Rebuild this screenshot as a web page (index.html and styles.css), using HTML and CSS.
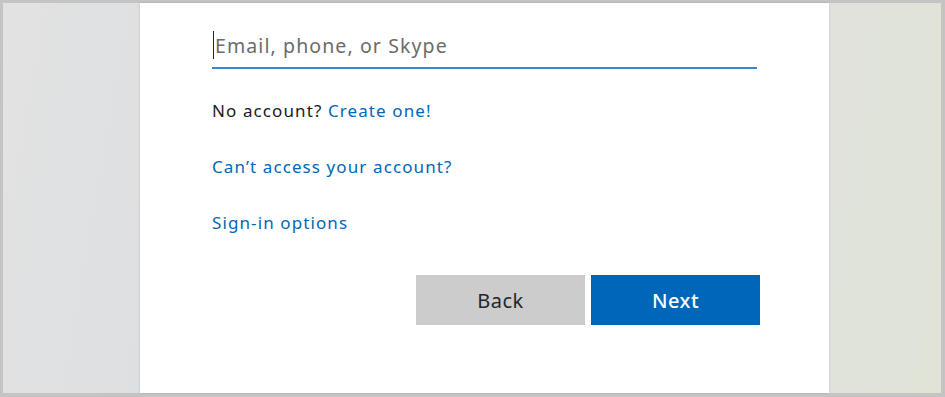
FILE: index.html
```html
<!DOCTYPE html>
<html lang="en">
<head>
  <meta charset="UTF-8">
  <meta name="viewport" content="width=device-width, initial-scale=1.0">
  <title>Sign in</title>
  <link rel="stylesheet" href="styles.css">
</head>
<body>
  <div class="frame">
    <div class="card">
      <div class="email-field">
        <span class="caret"></span><span class="placeholder">Email, phone, or Skype</span>
      </div>

      <p class="line">No account? <a href="#">Create one!</a></p>
      <p class="line"><a href="#">Can’t access your account?</a></p>
      <p class="line"><a href="#">Sign-in options</a></p>

      <div class="actions">
        <button class="btn back">Back</button>
        <button class="btn next">Next</button>
      </div>
    </div>
  </div>
</body>
</html>
```

FILE: styles.css
```css
body {
  margin: 0;
  font-family: "Noto Sans", "Open Sans", sans-serif;
}

.frame {
  box-sizing: border-box;
  height: 397px;
  border: 3px solid #c4c4c4;
  border-right-width: 4px;
  border-bottom-width: 4px;
  background: linear-gradient(100deg, #e2e2e2 0%, #dcdfe2 25%, #e0e2e0 70%, #e0e3d6 100%);
  padding-left: 137px;
  display: flex;
}

.card {
  box-sizing: border-box;
  width: 689px;
  background: #fff;
  box-shadow: 0 0 2px rgba(0, 0, 0, 0.18);
  padding: 20px 69px 0 72px;
}

.email-field {
  width: 545px;
  height: 44px;
  border-bottom: 2px solid #3a87cd;
  display: flex;
  align-items: center;
}

.caret {
  display: inline-block;
  width: 1px;
  height: 28px;
  background: #222;
  margin-left: 1px;
}

.placeholder {
  font-size: 19.5px;
  color: #6b6b6b;
  letter-spacing: 1.1px;
  margin-left: 1px;
}

.line {
  margin: 0;
  font-size: 17px;
  line-height: 20px;
  letter-spacing: 1.1px;
  color: #1b1b1b;
  margin-top: 36px;
}

.email-field + .line {
  margin-top: 32px;
}

.line a {
  color: #0067b8;
  text-decoration: none;
}

.actions {
  display: flex;
  justify-content: flex-end;
  gap: 6px;
  margin-top: 42px;
}

.btn {
  width: 169px;
  height: 50px;
  border: none;
  font-family: inherit;
  font-size: 20px;
  letter-spacing: 0.5px;
  cursor: pointer;
}

.back {
  background: #cccccc;
  color: #262626;
}

.next {
  background: #0067b8;
  color: #fff;
  font-weight: 500;
}
```
